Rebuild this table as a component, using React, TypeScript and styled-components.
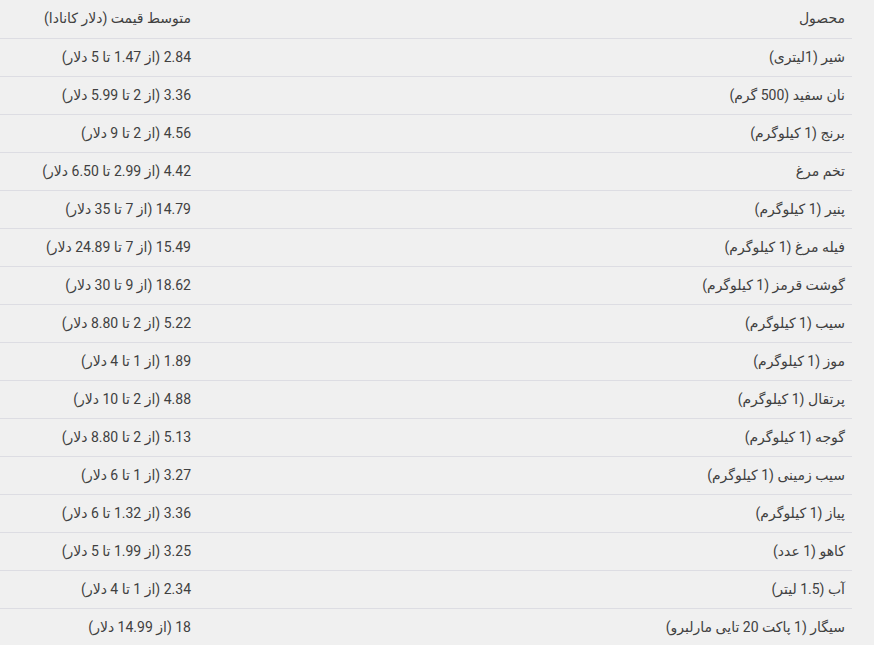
import React from "react";
import styled, { createGlobalStyle } from "styled-components";

const GlobalStyle = createGlobalStyle`
  html, body {
    margin: 0;
    padding: 0;
    background: #f0f0f0;
  }
  body {
    font-family: Roboto, "DejaVu Sans", sans-serif;
  }
`;

const Table = styled.table`
  direction: rtl;
  width: 852px;
  border-collapse: collapse;
  font-family: Roboto, "DejaVu Sans", sans-serif;
  font-size: 14px;
  color: #404040;
`;

const HeadCell = styled.th<{ $w?: number }>`
  text-align: right;
  font-weight: 400;
  height: 38px;
  padding: 0 7px 1px;
  box-sizing: border-box;
  width: ${(p) => (p.$w ? `${p.$w}px` : "auto")};
`;

const Row = styled.tr`
  border-top: 1px solid #dddde3;
`;

const Cell = styled.td`
  text-align: right;
  height: 38px;
  padding: 0 7px;
  box-sizing: border-box;
`;

const rows: [string, string][] = [
  ["شیر (1لیتری)", "2.84 (از 1.47 تا 5 دلار)"],
  ["نان سفید (500 گرم)", "3.36 (از 2 تا 5.99 دلار)"],
  ["برنج (1 کیلوگرم)", "4.56 (از 2 تا 9 دلار)"],
  ["تخم مرغ", "4.42 (از 2.99 تا 6.50 دلار)"],
  ["پنیر (1 کیلوگرم)", "14.79 (از 7 تا 35 دلار)"],
  ["فیله مرغ (1 کیلوگرم)", "15.49 (از 7 تا 24.89 دلار)"],
  ["گوشت قرمز (1 کیلوگرم)", "18.62 (از 9 تا 30 دلار)"],
  ["سیب (1 کیلوگرم)", "5.22 (از 2 تا 8.80 دلار)"],
  ["موز (1 کیلوگرم)", "1.89 (از 1 تا 4 دلار)"],
  ["پرتقال (1 کیلوگرم)", "4.88 (از 2 تا 10 دلار)"],
  ["گوجه (1 کیلوگرم)", "5.13 (از 2 تا 8.80 دلار)"],
  ["سیب زمینی (1 کیلوگرم)", "3.27 (از 1 تا 6 دلار)"],
  ["پیاز (1 کیلوگرم)", "3.36 (از 1.32 تا 6 دلار)"],
  ["کاهو (1 عدد)", "3.25 (از 1.99 تا 5 دلار)"],
  ["آب (1.5 لیتر)", "2.34 (از 1 تا 4 دلار)"],
  ["سیگار (1 پاکت 20 تایی مارلبرو)", "18 (از 14.99 دلار)"],
];

export default function App() {
  return (
    <>
      <GlobalStyle />
      <Table>
        <thead>
          <tr>
            <HeadCell $w={654}>محصول</HeadCell>
            <HeadCell>متوسط قیمت (دلار کانادا)</HeadCell>
          </tr>
        </thead>
        <tbody>
          {rows.map(([a, b]) => (
            <Row key={a}>
              <Cell>{a}</Cell>
              <Cell>{b}</Cell>
            </Row>
          ))}
        </tbody>
      </Table>
    </>
  );
}
